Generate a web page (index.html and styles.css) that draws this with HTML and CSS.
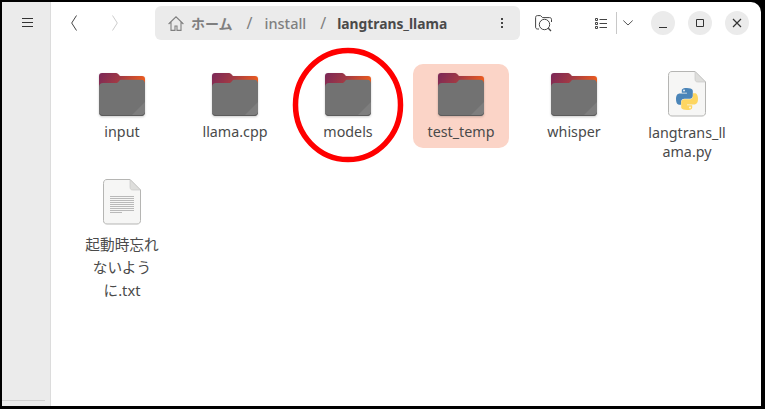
FILE: index.html
```html
<!DOCTYPE html>
<html lang="ja">
<head>
  <meta charset="UTF-8">
  <title>langtrans_llama</title>
  <link rel="stylesheet" href="styles.css">
</head>
<body>
  <!-- shared icon shapes -->
  <svg class="defs" aria-hidden="true">
    <defs>
      <linearGradient id="tab" x1="0" y1="0" x2="1" y2="0.25">
        <stop offset="0" stop-color="#7a2758"/>
        <stop offset="0.5" stop-color="#a23a44"/>
        <stop offset="1" stop-color="#ea5a1f"/>
      </linearGradient>
      <symbol id="folder" viewBox="0 0 46 43">
        <path d="M3 0h13c2 0 3 .6 4 2l1 1h22c2 0 3 1 3 3v12H0V3c0-2 1-3 3-3z" fill="url(#tab)"/>
        <path d="M4 10h13c1.500 0 2-.6 3-2 .7-.9 1.300-1.200 3-1.200h19c2.500 0 4 1.500 4 4v28.200c0 2.500-1.500 4-4 4H4c-2.500 0-4-1.500-4-4V14c0-2.500 1.500-4 4-4z" fill="#727272"/>
        <path d="M46 29v10c0 2.500-1.500 4-4 4H32z" fill="#7e7e7e"/>
        <path d="M4 42h38c2 0 3.500-1 4-3v0c0 2.500-1.500 4-4 4H4c-2.500 0-4-1.500-4-4v0c.5 2 2 3 4 3z" fill="#5c5c5c"/>
      </symbol>
      <symbol id="page" viewBox="0 0 38 46">
        <path d="M4 .5h23L37.500 11v30.500c0 2.200-1.300 3.500-3.500 3.500H4c-2.200 0-3.500-1.300-3.500-3.500v-37C.5 1.800 1.800.5 4 .5z" fill="#f6f6f5" stroke="#b5b5b3"/>
        <path d="M27 .5V8c0 2 1 3 3 3h7.500z" fill="#dededc" stroke="#c4c4c2" stroke-width=".6"/>
      </symbol>
    </defs>
  </svg>

  <div class="window">
    <aside class="sidebar">
      <button class="side-menu" aria-label="menu">
        <svg width="11" height="9" viewBox="0 0 11 9"><path d="M0 .5h11M0 4.500h11M0 8.500h11" stroke="#333" fill="none"/></svg>
      </button>
      <div class="side-rule"></div>
    </aside>

    <main class="main">
      <header class="toolbar">
        <div class="nav">
          <svg width="6" height="16" viewBox="0 0 6 16"><path d="M5.500.5L.7 8l4.800 7.500" stroke="#444" fill="none"/></svg>
          <svg width="6" height="16" viewBox="0 0 6 16"><path d="M.5.500L5.300 8 .5 15.500" stroke="#ccc" fill="none"/></svg>
        </div>

        <div class="pathbar">
          <svg class="home" width="16" height="15" viewBox="0 0 16 15"><path d="M.6 8L8 .8 15.400 8M3 6v8.400h4V10h2v4.400h4V6" stroke="#808080" stroke-width="1.100" fill="none"/></svg>
          <span class="crumb home-crumb">ホーム</span>
          <span class="sep">/</span>
          <span class="crumb install-crumb">install</span>
          <span class="sep">/</span>
          <span class="crumb current">langtrans_llama</span>
          <span class="dots"><i></i><i></i><i></i></span>
        </div>

        <svg class="find" width="18" height="17" viewBox="0 0 18 17">
          <path d="M4 14H2.500C1.300 14 .6 13.300.6 12V2.500C.6 1.300 1.300.6 2.500.6h3l2 2h7c1.300 0 2 .7 2 2V7" stroke="#444" fill="none"/>
          <circle cx="9.500" cy="9.500" r="5.200" stroke="#444" fill="#fff"/>
          <path d="M13.300 13.300l2.700 2.700" stroke="#444" stroke-width="1.300"/>
        </svg>

        <svg class="list-view" width="12" height="11" viewBox="0 0 12 11">
          <path d="M4.500 1.500H12M4.500 5.500H12M4.500 9.500H12" stroke="#444" fill="none"/>
          <path d="M.5.500h2v2h-2zM.5 4.500h2v2h-2zM.5 8.500h2v2h-2z" stroke="#444" fill="none"/>
        </svg>
        <div class="tool-sep"></div>
        <svg class="view-drop" width="10" height="6" viewBox="0 0 10 6"><path d="M.3.500L5 5 9.700.5" stroke="#555" fill="none"/></svg>

        <div class="win-buttons">
          <span class="win-btn"><svg width="10" height="10" viewBox="0 0 10 10"><path d="M1 9.500h8" stroke="#333" fill="none"/></svg></span>
          <span class="win-btn"><svg width="10" height="10" viewBox="0 0 10 10"><path d="M1.500 1.500h7v7h-7z" stroke="#333" fill="none"/></svg></span>
          <span class="win-btn"><svg width="10" height="10" viewBox="0 0 10 10"><path d="M1 1l8 8M9 1l-8 8" stroke="#333" stroke-width="1.200" fill="none"/></svg></span>
        </div>
      </header>

      <section class="files">
        <div class="file">
          <svg class="icon-folder"><use href="#folder"/></svg>
          <div class="name">input</div>
        </div>
        <div class="file">
          <svg class="icon-folder"><use href="#folder"/></svg>
          <div class="name">llama.cpp</div>
        </div>
        <div class="file">
          <svg class="icon-folder"><use href="#folder"/></svg>
          <div class="name">models</div>
          <svg class="red-circle" width="112" height="116" viewBox="0 0 112 116"><ellipse cx="56" cy="58" rx="52.500" ry="54.500" stroke="#f00" stroke-width="5.500" fill="none"/></svg>
        </div>
        <div class="file selected">
          <svg class="icon-folder"><use href="#folder"/></svg>
          <div class="name">test_temp</div>
        </div>
        <div class="file">
          <svg class="icon-folder"><use href="#folder"/></svg>
          <div class="name">whisper</div>
        </div>
        <div class="file">
          <svg class="icon-page" viewBox="0 0 38 46">
            <use href="#page"/>
            <g transform="translate(8 17)">
              <path d="M10.900 0C5.500 0 5.800 2.300 5.800 2.300v2.500h5.200v.8H3.800S0 5.100 0 11s3.100 5.700 3.100 5.700h2v-2.700s-.1-3.300 3.300-3.300h5.300s3.100 0 3.100-3V3S17.300 0 10.900 0z" fill="#4b85b8"/>
              <path d="M11.100 22c5.400 0 5.100-2.300 5.100-2.300v-2.500H11v-.8h7.200s3.800.5 3.800-5.400-3.100-5.700-3.100-5.700h-2v2.700s.1 3.300-3.300 3.300H8.300s-3.100 0-3.100 3V19s-.5 3 5.900 3z" fill="#fdd661"/>
              <circle cx="8" cy="2.500" r="1" fill="#e8eef3"/>
              <circle cx="14" cy="19.500" r="1" fill="#fff6d8"/>
            </g>
          </svg>
          <div class="name">langtrans_ll<br>ama.py</div>
        </div>
        <div class="file">
          <svg class="icon-page" viewBox="0 0 38 46">
            <use href="#page"/>
            <path d="M7 17.500h24M7 19.500h24M7 21.500h24M7 23.500h24M7 25.500h24M7 27.500h24M7 29.500h24M7 31.500h24M7 33.500h12" stroke="#a9a9a9" stroke-width=".8" fill="none"/>
          </svg>
          <div class="name cjk">起動時忘れ<br>ないよう<br>に.txt</div>
        </div>
      </section>
    </main>
  </div>
</body>
</html>
```

FILE: styles.css
```css
* {
  box-sizing: border-box;
}

html, body {
  margin: 0;
  height: 100%;
  background: #000;
  overflow: hidden;
}

body {
  padding: 2px 4px 3px 2px;
  font-family: "Noto Sans", "Noto Sans CJK JP", sans-serif;
  color: #3d3d3d;
}

.defs {
  position: absolute;
  width: 0;
  height: 0;
}

.window {
  display: flex;
  height: 100%;
  background: #fff;
  border-top-right-radius: 10px;
  overflow: hidden;
}

.sidebar {
  width: 49px;
  display: flex;
  flex-direction: column;
  background: #ebebeb;
  border-right: 1px solid #dcdcdc;
}

.side-menu {
  display: flex;
  justify-content: center;
  padding: 16px 0 0 3px;
  background: none;
  border: none;
}

.side-rule {
  margin: auto 5px 5px 0;
  height: 1px;
  background: #d0d0d0;
}

.main {
  flex: 1;
  min-width: 0;
}

/* top bar */
.toolbar {
  display: flex;
  align-items: center;
  height: 42px;
}

.nav {
  display: flex;
  gap: 35px;
  margin-left: 20px;
  width: 84px;
}

.pathbar {
  display: flex;
  align-items: center;
  width: 365px;
  height: 34px;
  padding-left: 13px;
  background: #ebebeb;
  border-radius: 6px;
  font-size: 14.500px;
  color: #7f7f7f;
}

.home {
  flex: none;
}

.crumb {
  white-space: nowrap;
}

.home-crumb {
  margin-left: 7px;
  font-size: 14px;
  font-weight: 700;
}

.sep {
  margin: 0 13px 0 14px;
  font-size: 16px;
}

.install-crumb {
  margin-left: -1px;
  font-weight: 500;
}

.current {
  margin-left: -2px;
  font-size: 13.800px;
  font-weight: 700;
  color: #4a4a4a;
}

.dots {
  display: flex;
  flex-direction: column;
  gap: 2px;
  margin-left: auto;
  margin-right: 17px;
}

.dots i {
  width: 2px;
  height: 2px;
  background: #444;
}

.find {
  margin-left: 15px;
}

.list-view {
  margin-left: 42px;
}

.tool-sep {
  width: 1px;
  height: 22px;
  margin-left: 9px;
  background: #c8c8c8;
}

.view-drop {
  margin-left: 6px;
}

.win-buttons {
  display: flex;
  gap: 13px;
  margin-left: 18px;
}

.win-btn {
  display: flex;
  align-items: center;
  justify-content: center;
  width: 24px;
  height: 24px;
  border-radius: 50%;
  background: #ebebeb;
}

/* file grid */
.files {
  display: grid;
  grid-template-columns: repeat(6, 96px);
  grid-auto-rows: 84px;
  column-gap: 17px;
  row-gap: 24px;
  padding: 20px 0 0 23px;
}

.file {
  position: relative;
  display: flex;
  flex-direction: column;
  align-items: center;
  padding-top: 9px;
  border-radius: 10px;
}

.file.selected {
  background: #fbd4c7;
}

.icon-folder {
  width: 46px;
  height: 43px;
  flex: none;
  filter: drop-shadow(0 1px 1px rgba(0, 0, 0, 0.2));
}

.icon-page {
  width: 38px;
  height: 46px;
  flex: none;
  margin-top: -2px;
}

.name {
  margin-top: 6px;
  font-size: 14.300px;
  line-height: 19px;
  text-align: center;
  white-space: nowrap;
  color: #4a4a4a;
}

.name.cjk {
  margin-top: 8px;
  font-size: 14.670px;
  line-height: 23px;
}

/* annotation drawn on the screenshot */
.red-circle {
  position: absolute;
  left: -8px;
  top: -17px;
}
```
